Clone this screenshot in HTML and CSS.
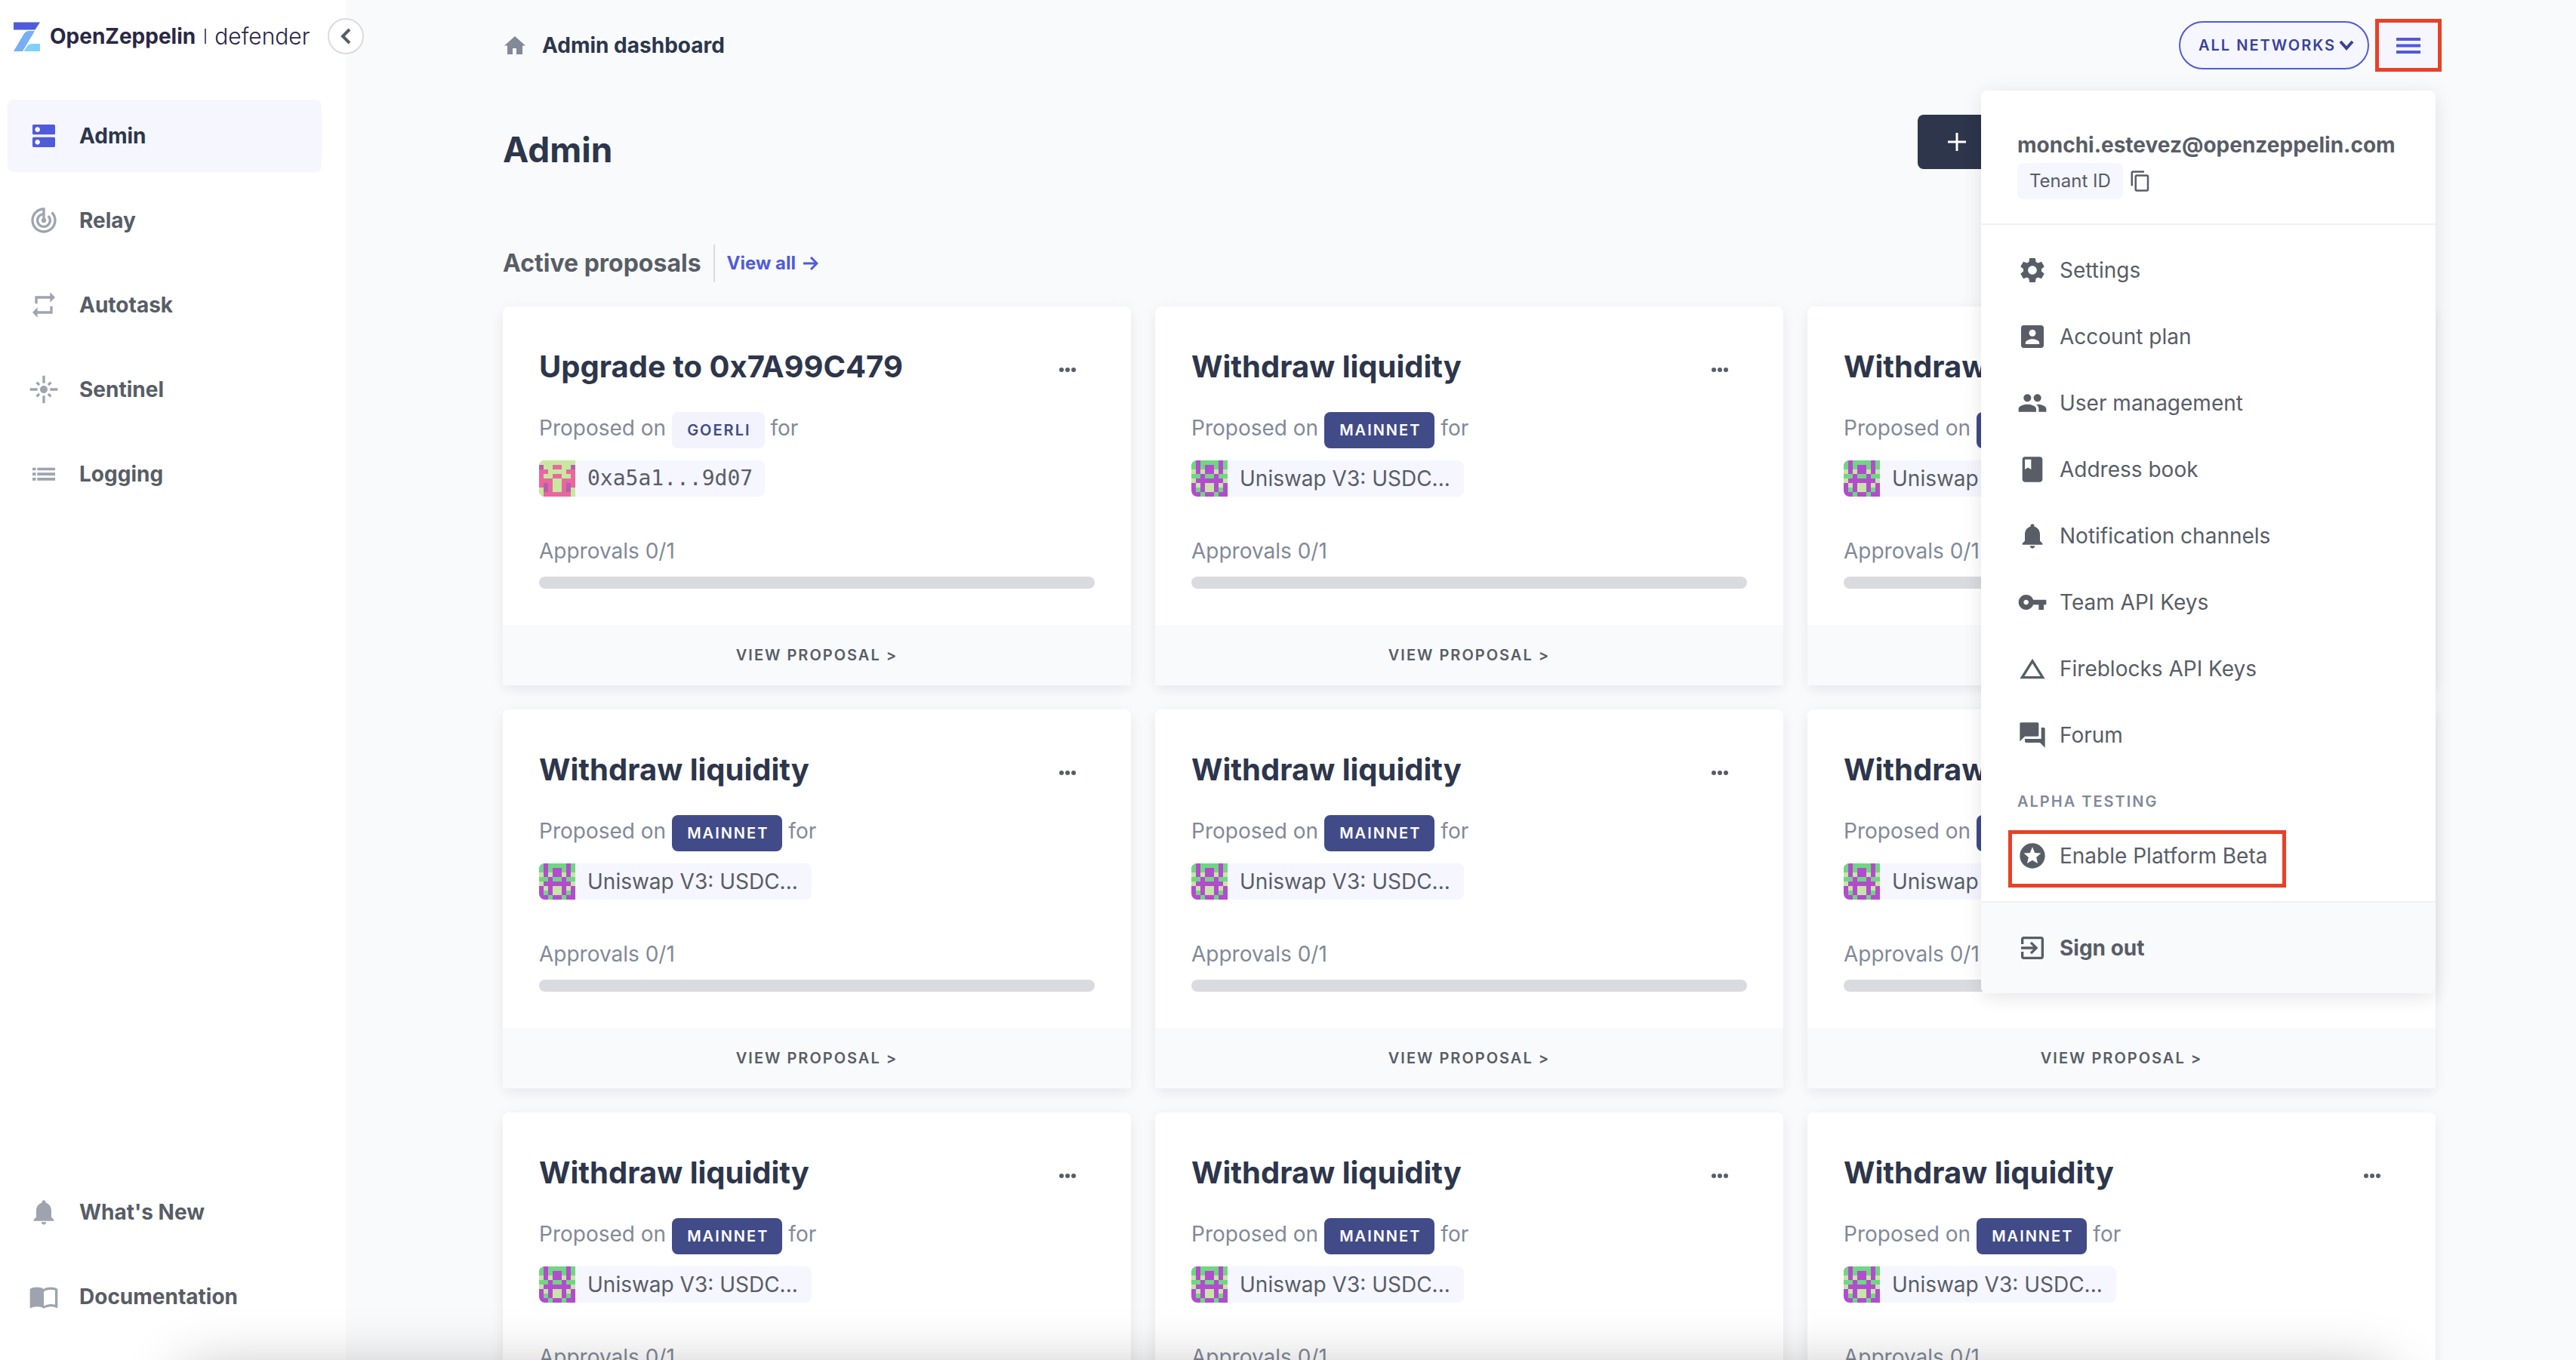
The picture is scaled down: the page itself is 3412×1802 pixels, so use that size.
FILE: index.html
```html
<!DOCTYPE html>
<html lang="en">
<head>
<meta charset="utf-8">
<title>OpenZeppelin Defender - Admin</title>
<link rel="stylesheet" href="styles.css">
</head>
<body>
<svg class="sprite" aria-hidden="true">
  <symbol id="avatar-green" viewBox="0 0 8 8"><g shape-rendering="crispEdges"><path fill="#b34bcf" d="M0 0h8v8H0z"/><path fill="#70d683" d="M0 0h1v2H0zM2 0h4v1H2zM2 1h1v1H2zM5 1h1v1H5zM7 0h1v2H7zM0 3h2v1H0zM3 3h2v1H3zM6 3h2v1H6zM1 6h1v1H1zM6 6h1v1H6zM2 7h1v1H2zM5 7h1v1H5z"/><path fill="#c9e3a9" d="M0 2h1v1H0zM2 2h1v1H2zM5 2h1v1H5zM7 2h1v1H7zM0 4h1v1H0zM7 4h1v1H7zM1 5h1v1H1zM6 5h1v1H6zM3 5h2v2H3z"/></g></symbol>
  <symbol id="avatar-pink" viewBox="0 0 8 8"><g shape-rendering="crispEdges"><path fill="#e9679f" d="M0 0h8v8H0z"/><path fill="#c8e8a0" d="M0 0h8v1H0zM1 1h2v1H1zM5 1h2v1H5zM2 2h4v1H2zM1 3h2v1H1zM5 3h2v1H5zM3 4h2v3H3zM0 6h1v2H0zM7 6h1v2H7z"/><path fill="#b45fab" d="M0 1h1v1H0zM7 1h1v1H7zM1 5h1v2H1zM6 5h1v2H6z"/></g></symbol>
  <symbol id="bell" viewBox="0 0 24 24"><path d="M12 22c1.1 0 2-.9 2-2h-4c0 1.1.89 2 2 2zm6-6v-5c0-3.07-1.64-5.64-4.5-6.32V4c0-.83-.67-1.5-1.5-1.5s-1.5.67-1.5 1.5v.68C7.63 5.36 6 7.92 6 11v5l-2 2v1h16v-1l-2-2z"/></symbol>
  <symbol id="dots" viewBox="0 0 24 8"><circle cx="4" cy="4" r="3"/><circle cx="12" cy="4" r="3"/><circle cx="20" cy="4" r="3"/></symbol>
</svg>

<div class="app">
  <aside class="sidebar">
    <a class="brand" href="#">
      <svg class="brand-mark" viewBox="0 0 35 39"><path fill="#4f5bdb" d="M0 .5h35L28.500 10.500H0z"/><path fill="#78aef5" d="M28 12h-8q-4 0-7 5L0 39h12z"/><path fill="#82d0f7" d="M13.500 39l5-7.500q2-2.500 5.500-2.500h11v10z"/></svg>
      <span class="brand-name">OpenZeppelin</span>
      <span class="brand-bar"></span>
      <span class="brand-product">defender</span>
    </a>
    <button class="collapse" aria-label="Collapse sidebar"><svg viewBox="0 0 14 22"><path d="M12 2L3 11l9 9" fill="none" stroke="#585d66" stroke-width="4"/></svg></button>
    <nav class="nav">
      <a class="nav-item active" href="#"><svg class="nav-icon" viewBox="0 0 24 24"><path d="M20 13H4c-.55 0-1 .45-1 1v6c0 .55.45 1 1 1h16c.55 0 1-.45 1-1v-6c0-.55-.45-1-1-1zM7 19c-1.100 0-2-.9-2-2s.9-2 2-2 2 .9 2 2-.9 2-2 2zM20 3H4c-.55 0-1 .45-1 1v6c0 .55.45 1 1 1h16c.55 0 1-.45 1-1V4c0-.55-.45-1-1-1zM7 9c-1.100 0-2-.9-2-2s.9-2 2-2 2 .9 2 2-.9 2-2 2z"/></svg>Admin</a>
      <a class="nav-item" href="#"><svg class="nav-icon" viewBox="0 0 24 24"><path d="M19.070 4.930l-1.410 1.410C19.100 7.790 20 9.790 20 12c0 4.420-3.580 8-8 8s-8-3.580-8-8c0-4.080 3.050-7.440 7-7.930v2.020C8.160 6.570 6 9.030 6 12c0 3.310 2.690 6 6 6s6-2.690 6-6c0-1.660-.67-3.160-1.760-4.240l-1.410 1.410C15.550 9.900 16 10.900 16 12c0 2.210-1.790 4-4 4s-4-1.790-4-4c0-1.860 1.280-3.410 3-3.860v2.140c-.6.35-1 .98-1 1.720 0 1.100.9 2 2 2s2-.9 2-2c0-.74-.4-1.380-1-1.720V2h-1C6.480 2 2 6.480 2 12s4.480 10 10 10 10-4.480 10-10c0-2.760-1.120-5.260-2.930-7.070z"/></svg>Relay</a>
      <a class="nav-item" href="#"><svg class="nav-icon" viewBox="0 0 24 24"><path d="M7 7h10v3l4-4-4-4v3H5v6h2V7zm10 10H7v-3l-4 4 4 4v-3h12v-6h-2v4z"/></svg>Autotask</a>
      <a class="nav-item" href="#"><svg class="nav-icon" viewBox="0 0 24 24"><path d="M7 11H1v2h6v-2zm2.170-3.240L7.050 5.640 5.640 7.050l2.120 2.120 1.410-1.410zM13 1h-2v6h2V1zm5.360 6.050l-1.410-1.410-2.120 2.120 1.410 1.410 2.120-2.120zM17 11v2h6v-2h-6zm-5-2c-1.660 0-3 1.340-3 3s1.340 3 3 3 3-1.340 3-3-1.340-3-3-3zm2.830 7.240l2.120 2.120 1.410-1.410-2.120-2.120-1.410 1.410zm-9.190.71l1.410 1.410 2.120-2.120-1.410-1.410-2.120 2.120zM11 23h2v-6h-2v6z"/></svg>Sentinel</a>
      <a class="nav-item" href="#"><svg class="nav-icon" viewBox="0 0 24 24"><path d="M3 7h2.700v2.200H3zM6.800 7H21v2.200H6.800zM3 11h2.700v2.200H3zM6.800 11H21v2.200H6.800zM3 15h2.700v2.200H3zM6.800 15H21v2.200H6.800z"/></svg>Logging</a>
    </nav>
    <nav class="nav nav-bottom">
      <a class="nav-item" href="#"><svg class="nav-icon"><use href="#bell"/></svg>What's New</a>
      <a class="nav-item" href="#"><svg class="nav-icon" viewBox="0 0 24 24"><path d="M21 5c-1.110-.35-2.330-.5-3.500-.5-1.950 0-4.050.4-5.500 1.500-1.450-1.100-3.550-1.500-5.500-1.500S2.450 4.900 1 6v14.650c0 .25.25.5.5.5.1 0 .15-.05.25-.05C3.100 20.450 5.050 20 6.500 20c1.950 0 4.050.4 5.500 1.500 1.350-.85 3.800-1.500 5.500-1.500 1.650 0 3.350.3 4.750 1.050.1.05.15.05.25.05.25 0 .5-.25.5-.5V6c-.6-.45-1.250-.75-2-1zm0 13.500c-1.100-.35-2.300-.5-3.500-.5-1.700 0-4.150.65-5.500 1.500V8c1.350-.85 3.800-1.500 5.500-1.500 1.200 0 2.400.15 3.500.5v11.500z"/></svg>Documentation</a>
    </nav>
  </aside>

  <div class="main">
    <header class="topbar">
      <div class="crumbs">
        <svg class="home" viewBox="0 0 28 24"><path d="M14 0l14 12.500h-4V24h-8v-8h-5v8H4V12.500H0z"/></svg>
        <span>Admin dashboard</span>
      </div>
      <div class="topbar-actions">
        <div class="network">
          <select class="network-select" aria-label="Network"><option>ALL NETWORKS</option></select>
          <svg class="network-arrow" viewBox="0 0 20 14"><path d="M2 2l8 9 8-9" fill="none" stroke="#3a4299" stroke-width="4"/></svg>
        </div>
        <button class="menu-toggle" aria-label="Account menu"><svg viewBox="0 0 32 21"><path d="M0 0h32v4H0zM0 8.500h32v4H0zM0 17h32v4H0z"/></svg></button>
      </div>
    </header>

    <div class="page-head">
      <h1>Admin</h1>
      <button class="add" aria-label="Add"><svg viewBox="0 0 24 24"><path d="M10.500 0h3v10.500H24v3H13.500V24h-3V13.500H0v-3h10.500z"/></svg></button>
    </div>

    <div class="section-head">
      <h2>Active proposals</h2>
      <a class="view-all" href="#">View all<svg viewBox="0 0 20 18"><path d="M0 9h18M10 1l8 8-8 8" fill="none" stroke="#4f5bdb" stroke-width="3"/></svg></a>
    </div>

    <main class="cards">
      <article class="card">
        <div class="card-body">
          <div class="card-title"><h3>Upgrade to 0x7A99C479</h3><button class="more" aria-label="More"><svg><use href="#dots"/></svg></button></div>
          <div class="proposed">Proposed on <span class="badge badge-light">GOERLI</span> for</div>
          <div class="address mono"><svg><use href="#avatar-pink"/></svg><span>0xa5a1...9d07</span></div>
          <div class="approvals">Approvals 0/1</div>
          <div class="progress"></div>
        </div>
        <a class="card-foot" href="#">VIEW PROPOSAL &gt;</a>
      </article>
      <article class="card">
        <div class="card-body">
          <div class="card-title"><h3>Withdraw liquidity</h3><button class="more" aria-label="More"><svg><use href="#dots"/></svg></button></div>
          <div class="proposed">Proposed on <span class="badge">MAINNET</span> for</div>
          <div class="address"><svg><use href="#avatar-green"/></svg><span>Uniswap V3: USDC...</span></div>
          <div class="approvals">Approvals 0/1</div>
          <div class="progress"></div>
        </div>
        <a class="card-foot" href="#">VIEW PROPOSAL &gt;</a>
      </article>
      <article class="card">
        <div class="card-body">
          <div class="card-title"><h3>Withdraw liquidity</h3><button class="more" aria-label="More"><svg><use href="#dots"/></svg></button></div>
          <div class="proposed">Proposed on <span class="badge">MAINNET</span> for</div>
          <div class="address"><svg><use href="#avatar-green"/></svg><span>Uniswap V3: USDC...</span></div>
          <div class="approvals">Approvals 0/1</div>
          <div class="progress"></div>
        </div>
        <a class="card-foot" href="#">VIEW PROPOSAL &gt;</a>
      </article>
      <article class="card">
        <div class="card-body">
          <div class="card-title"><h3>Withdraw liquidity</h3><button class="more" aria-label="More"><svg><use href="#dots"/></svg></button></div>
          <div class="proposed">Proposed on <span class="badge">MAINNET</span> for</div>
          <div class="address"><svg><use href="#avatar-green"/></svg><span>Uniswap V3: USDC...</span></div>
          <div class="approvals">Approvals 0/1</div>
          <div class="progress"></div>
        </div>
        <a class="card-foot" href="#">VIEW PROPOSAL &gt;</a>
      </article>
      <article class="card">
        <div class="card-body">
          <div class="card-title"><h3>Withdraw liquidity</h3><button class="more" aria-label="More"><svg><use href="#dots"/></svg></button></div>
          <div class="proposed">Proposed on <span class="badge">MAINNET</span> for</div>
          <div class="address"><svg><use href="#avatar-green"/></svg><span>Uniswap V3: USDC...</span></div>
          <div class="approvals">Approvals 0/1</div>
          <div class="progress"></div>
        </div>
        <a class="card-foot" href="#">VIEW PROPOSAL &gt;</a>
      </article>
      <article class="card">
        <div class="card-body">
          <div class="card-title"><h3>Withdraw liquidity</h3><button class="more" aria-label="More"><svg><use href="#dots"/></svg></button></div>
          <div class="proposed">Proposed on <span class="badge">MAINNET</span> for</div>
          <div class="address"><svg><use href="#avatar-green"/></svg><span>Uniswap V3: USDC...</span></div>
          <div class="approvals">Approvals 0/1</div>
          <div class="progress"></div>
        </div>
        <a class="card-foot" href="#">VIEW PROPOSAL &gt;</a>
      </article>
      <article class="card">
        <div class="card-body">
          <div class="card-title"><h3>Withdraw liquidity</h3><button class="more" aria-label="More"><svg><use href="#dots"/></svg></button></div>
          <div class="proposed">Proposed on <span class="badge">MAINNET</span> for</div>
          <div class="address"><svg><use href="#avatar-green"/></svg><span>Uniswap V3: USDC...</span></div>
          <div class="approvals">Approvals 0/1</div>
          <div class="progress"></div>
        </div>
        <a class="card-foot" href="#">VIEW PROPOSAL &gt;</a>
      </article>
      <article class="card">
        <div class="card-body">
          <div class="card-title"><h3>Withdraw liquidity</h3><button class="more" aria-label="More"><svg><use href="#dots"/></svg></button></div>
          <div class="proposed">Proposed on <span class="badge">MAINNET</span> for</div>
          <div class="address"><svg><use href="#avatar-green"/></svg><span>Uniswap V3: USDC...</span></div>
          <div class="approvals">Approvals 0/1</div>
          <div class="progress"></div>
        </div>
        <a class="card-foot" href="#">VIEW PROPOSAL &gt;</a>
      </article>
      <article class="card">
        <div class="card-body">
          <div class="card-title"><h3>Withdraw liquidity</h3><button class="more" aria-label="More"><svg><use href="#dots"/></svg></button></div>
          <div class="proposed">Proposed on <span class="badge">MAINNET</span> for</div>
          <div class="address"><svg><use href="#avatar-green"/></svg><span>Uniswap V3: USDC...</span></div>
          <div class="approvals">Approvals 0/1</div>
          <div class="progress"></div>
        </div>
        <a class="card-foot" href="#">VIEW PROPOSAL &gt;</a>
      </article>
    </main>

    <div class="menu">
      <div class="menu-account">
        <div class="email">monchi.estevez@openzeppelin.com</div>
        <div class="tenant"><span class="tenant-chip">Tenant ID</span><button class="copy" aria-label="Copy tenant ID"><svg viewBox="0 0 24 24"><path d="M16 1H4c-1.100 0-2 .9-2 2v14h2V3h12V1zm3 4H8c-1.100 0-2 .9-2 2v14c0 1.100.9 2 2 2h11c1.100 0 2-.9 2-2V7c0-1.100-.9-2-2-2zm0 16H8V7h11v14z"/></svg></button></div>
      </div>
      <nav class="menu-list">
        <a class="menu-item" href="#"><svg viewBox="0 0 24 24"><path d="M19.140 12.940c.04-.3.06-.61.06-.94 0-.32-.02-.64-.07-.94l2.030-1.580c.18-.14.23-.41.12-.61l-1.920-3.320c-.12-.22-.37-.29-.59-.22l-2.390.96c-.5-.38-1.030-.7-1.620-.94l-.36-2.540c-.04-.24-.24-.41-.48-.41h-3.840c-.24 0-.43.17-.47.41l-.36 2.540c-.59.24-1.130.57-1.620.94l-2.390-.96c-.22-.08-.47 0-.59.22L2.740 8.870c-.12.21-.08.47.12.61l2.030 1.580c-.05.3-.09.63-.09.94s.02.64.07.94l-2.030 1.580c-.18.14-.23.41-.12.61l1.920 3.320c.12.22.37.29.59.22l2.390-.96c.5.38 1.030.7 1.620.94l.36 2.540c.05.24.24.41.48.41h3.840c.24 0 .44-.17.47-.41l.36-2.540c.59-.24 1.130-.56 1.620-.94l2.390.96c.22.08.47 0 .59-.22l1.920-3.320c.12-.22.07-.47-.12-.61l-2.010-1.580zM12 15.500c-1.930 0-3.500-1.570-3.500-3.500s1.570-3.500 3.500-3.500 3.500 1.570 3.500 3.500-1.570 3.500-3.500 3.500z"/></svg>Settings</a>
        <a class="menu-item" href="#"><svg viewBox="0 0 24 24"><path d="M3 5v14c0 1.100.89 2 2 2h14c1.100 0 2-.9 2-2V5c0-1.100-.9-2-2-2H5c-1.110 0-2 .9-2 2zm11.700 4.200c0 1.500-1.200 2.700-2.700 2.700s-2.700-1.200-2.700-2.700 1.200-2.700 2.700-2.700 2.700 1.200 2.700 2.700zM6.500 17c0-2 3.500-3 5.500-3s5.500 1 5.500 3v1h-11v-1z"/></svg>Account plan</a>
        <a class="menu-item" href="#"><svg viewBox="0 0 24 24"><path d="M16 11c1.660 0 2.990-1.340 2.990-3S17.660 5 16 5c-1.660 0-3 1.340-3 3s1.340 3 3 3zm-8 0c1.660 0 2.990-1.340 2.990-3S9.660 5 8 5C6.340 5 5 6.340 5 8s1.340 3 3 3zm0 2c-2.330 0-7 1.170-7 3.500V19h14v-2.500c0-2.330-4.670-3.500-7-3.500zm8 0c-.29 0-.62.02-.97.05 1.160.84 1.970 1.970 1.970 3.450V19h6v-2.500c0-2.330-4.670-3.500-7-3.500z"/></svg>User management</a>
        <a class="menu-item" href="#"><svg viewBox="0 0 24 24"><path d="M18 2H6c-1.100 0-2 .9-2 2v16c0 1.100.9 2 2 2h12c1.100 0 2-.9 2-2V4c0-1.100-.9-2-2-2zM6 4h5v8l-2.500-1.500L6 12V4z"/></svg>Address book</a>
        <a class="menu-item" href="#"><svg><use href="#bell"/></svg>Notification channels</a>
        <a class="menu-item" href="#"><svg viewBox="0 0 24 24"><path d="M12.650 10C11.830 7.670 9.610 6 7 6c-3.310 0-6 2.690-6 6s2.690 6 6 6c2.610 0 4.830-1.670 5.650-4H17v4h4v-4h2v-4H12.650zM7 14c-1.100 0-2-.9-2-2s.9-2 2-2 2 .9 2 2-.9 2-2 2z"/></svg>Team API Keys</a>
        <a class="menu-item" href="#"><svg viewBox="0 0 24 24"><path d="M12 7.770L18.390 18H5.610L12 7.770M12 4L2 20h20L12 4z"/></svg>Fireblocks API Keys</a>
        <a class="menu-item" href="#"><svg viewBox="0 0 24 24"><path d="M21 6h-2v9H6v2c0 .55.45 1 1 1h11l4 4V7c0-.55-.45-1-1-1zm-4 6V3c0-.55-.45-1-1-1H3c-.55 0-1 .45-1 1v14l4-4h10c.55 0 1-.45 1-1z"/></svg>Forum</a>
        <div class="menu-label">ALPHA TESTING</div>
        <a class="menu-item highlighted" href="#"><svg viewBox="0 0 24 24"><path d="M11.990 2C6.470 2 2 6.480 2 12s4.470 10 9.990 10C17.520 22 22 17.520 22 12S17.520 2 11.990 2zm4.240 16L12 15.450 7.770 18l1.120-4.810-3.730-3.230 4.920-.42L12 5l1.920 4.530 4.920.42-3.730 3.230L16.230 18z"/></svg>Enable Platform Beta</a>
      </nav>
      <button class="sign-out"><svg viewBox="0 0 24 24"><path d="M10.090 15.590L11.500 17l5-5-5-5-1.410 1.410L12.670 11H3v2h9.670l-2.580 2.590zM19 3H5c-1.110 0-2 .9-2 2v4h2V5h14v14H5v-4H3v4c0 1.100.89 2 2 2h14c1.100 0 2-.9 2-2V5c0-1.100-.9-2-2-2z"/></svg>Sign out</button>
    </div>
  </div>
</div>
<div class="bottom-shade"></div>
</body>
</html>
```
FILE: styles.css
```css
:root {
  --ink: #2d364b;
  --text: #585d66;
  --muted: #828999;
  --icon: #9ea3af;
  --brand: #4f5bdb;
  --lavender: #f5f6ff;
  --surface: #f9fafc;
  --line: #f0f1f4;
  --alert: #ea4025;
  --gutter-left: 208px;
  --gutter-right: 186px;
}

* { box-sizing: border-box; }

body {
  margin: 0;
  height: 100vh;
  overflow: hidden;
  background: var(--surface);
  color: var(--text);
  font: 400 28px/40px Inter, "Liberation Sans", sans-serif;
}

a { color: inherit; text-decoration: none; }
h1, h2, h3 { margin: 0; font-weight: 700; }
button { padding: 0; border: 0; background: none; color: inherit; font: inherit; }
svg { display: block; flex: none; fill: currentColor; }
.sprite { position: absolute; width: 0; height: 0; }

.app { display: flex; height: 100vh; }

/* Sidebar */
.sidebar {
  position: relative;
  z-index: 2;
  display: flex;
  flex: none;
  flex-direction: column;
  width: 458px;
  padding: 28px 32px 36px 10px;
  background: #fff;
}
.brand { display: flex; align-items: center; height: 40px; padding-left: 8px; color: #2a2745; font-size: 28px; }
.brand-mark { width: 35px; height: 39px; margin-right: 13px; }
.brand-name { font-weight: 700; }
.brand-bar { width: 2px; height: 20px; margin: 0 11px 0 12px; background: #5b5870; }
.brand-product { font-size: 30px; font-weight: 300; }
.collapse {
  position: absolute;
  top: 24px;
  right: -24px;
  display: flex;
  align-items: center;
  justify-content: center;
  width: 48px;
  height: 48px;
  border: 2px solid #dadbe0;
  border-radius: 50%;
  background: #fff;
}
.collapse svg { width: 14px; height: 22px; }
.nav { display: flex; flex-direction: column; gap: 16px; margin-top: 64px; }
.nav-bottom { margin-top: auto; }
.nav-item { display: flex; align-items: center; gap: 27px; height: 96px; padding-left: 28px; border-radius: 8px; font-weight: 700; }
.nav-icon { width: 40px; height: 40px; color: var(--icon); }
.nav-item.active { background: var(--lavender); color: var(--ink); }
.nav-item.active .nav-icon { color: var(--brand); }

/* Main column */
.main { position: relative; flex: 1; min-width: 0; padding: 0 var(--gutter-right) 0 var(--gutter-left); }
.topbar { display: flex; align-items: center; justify-content: space-between; height: 120px; }
.crumbs { display: flex; align-items: center; gap: 22px; padding-left: 2px; color: var(--ink); font-weight: 700; }
.home { width: 28px; height: 24px; color: var(--muted); }
.topbar-actions { display: flex; align-items: center; gap: 8px; margin-right: -8px; }
.network { position: relative; }
.network-select {
  appearance: none;
  width: 252px;
  height: 64px;
  padding: 0 24px;
  border: 2px solid var(--brand);
  border-radius: 32px;
  background: var(--lavender);
  color: #3a4299;
  font: 600 20px/24px Inter, sans-serif;
  letter-spacing: 2px;
}
.network-arrow { position: absolute; top: 25px; right: 20px; width: 20px; height: 14px; pointer-events: none; }
.menu-toggle {
  display: flex;
  align-items: center;
  justify-content: center;
  width: 88px;
  height: 70px;
  border: 5px solid var(--alert);
  background: var(--lavender);
  color: var(--brand);
}
.menu-toggle svg { width: 32px; height: 21px; }

.page-head { display: flex; align-items: flex-start; justify-content: space-between; height: 80px; margin-top: 32px; color: var(--ink); }
.page-head h1 { padding-top: 10px; font-size: 46px; line-height: 72px; }
.add { width: 686px; height: 72px; padding-left: 40px; border-radius: 8px; background: var(--ink); color: #fff; }
.add svg { width: 24px; height: 24px; }

.section-head { display: flex; align-items: center; gap: 16px; height: 50px; margin: 92px 0 32px; }
.section-head h2 { font-size: 32px; }
.view-all { display: flex; align-items: center; gap: 10px; padding-left: 16px; border-left: 2px solid #dadbe0; color: var(--brand); font-size: 24px; font-weight: 700; line-height: 50px; }
.view-all svg { width: 20px; height: 18px; }

.cards { display: grid; grid-template-columns: repeat(3, 1fr); gap: 32px; }
.card { border-radius: 8px; background: #fff; box-shadow: 0 8px 16px rgba(20, 24, 32, .05), 0 0 24px rgba(20, 24, 32, .03); }
.card-body { padding: 48px; }
.card-title { display: flex; align-items: center; justify-content: space-between; color: var(--ink); }
.card-title h3 { font-size: 40px; line-height: 64px; }
.more { padding: 8px 24px 0 0; color: var(--text); }
.more svg { width: 24px; height: 8px; }
.proposed { display: flex; align-items: baseline; gap: 8px; margin-top: 28px; color: var(--muted); }
.badge { padding: 0 18px 0 20px; border-radius: 8px; background: #414b87; color: #fff; font-size: 20px; font-weight: 600; line-height: 48px; letter-spacing: 2px; }
.badge-light { background: #f2f3fd; color: #414b87; }
.address { display: flex; align-items: center; gap: 16px; width: fit-content; height: 48px; margin-top: 16px; padding-right: 18px; border-radius: 8px; background: var(--lavender); overflow: hidden; }
.address svg { width: 48px; height: 48px; }
.address.mono { padding-right: 16px; font-family: "DejaVu Sans Mono", monospace; }
.approvals { margin-top: 52px; color: var(--muted); }
.progress { height: 16px; margin-top: 14px; border-radius: 8px; background: #dadbe0; }
.card-foot { display: block; background: var(--surface); font-size: 20px; font-weight: 600; line-height: 80px; letter-spacing: 2px; text-align: center; }

/* Account menu */
.menu {
  position: absolute;
  top: 120px;
  right: var(--gutter-right);
  width: 602px;
  border-radius: 8px;
  background: #fff;
  box-shadow: 0 8px 24px rgba(20, 24, 32, .06), 0 0 32px rgba(20, 24, 32, .05);
  overflow: hidden;
}
.menu-account { padding: 52px 48px 32px; border-bottom: 2px solid var(--line); }
.email { font-weight: 700; }
.tenant { display: flex; align-items: center; gap: 8px; margin-top: 4px; }
.tenant-chip { padding: 0 16px; border-radius: 8px; background: var(--lavender); font-size: 24px; line-height: 48px; }
.copy svg { width: 30px; height: 30px; }
.menu-list { display: flex; flex-direction: column; padding: 16px 0; }
.menu-item { display: flex; align-items: center; gap: 16px; height: 88px; margin: 0 48px; }
.menu-item svg, .sign-out svg { width: 40px; height: 40px; }
.menu-label { padding: 32px 48px 16px; color: var(--muted); font-size: 20px; font-weight: 600; line-height: 24px; letter-spacing: 2px; }
.menu-item.highlighted { width: fit-content; height: 76px; margin: 10px 0 2px 36px; padding: 0 20px 8px 7px; border: 5px solid var(--alert); }
.sign-out { display: flex; align-items: center; gap: 16px; width: 100%; height: 122px; padding: 0 48px; border-top: 2px solid var(--line); background: var(--surface); font-weight: 700; }

/* Soft shade along the bottom edge of the window */
.bottom-shade {
  position: fixed;
  right: 246px;
  bottom: -216px;
  left: 240px;
  z-index: 3;
  height: 200px;
  border-radius: 24px;
  box-shadow: 0 0 80px rgba(0, 0, 0, .28);
  pointer-events: none;
}
```
